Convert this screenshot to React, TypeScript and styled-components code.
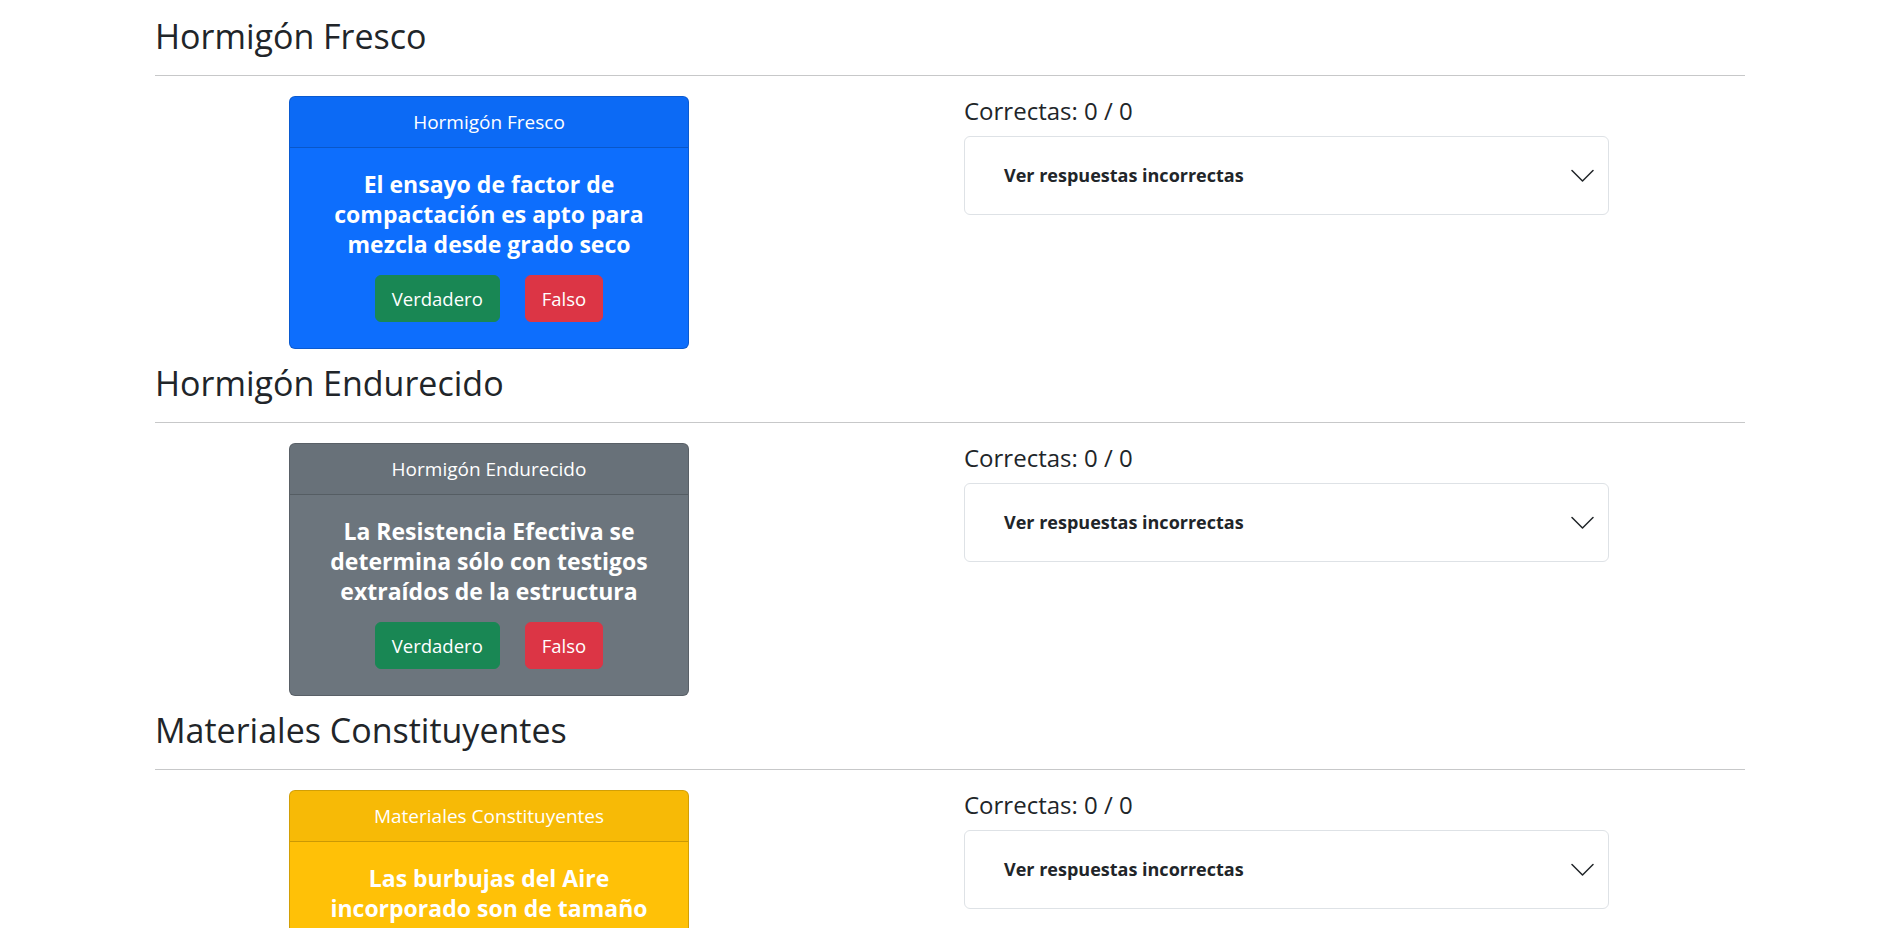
import React from "react";
import styled, { createGlobalStyle } from "styled-components";

const GlobalStyle = createGlobalStyle`
  html, body {
    margin: 0;
    padding: 0;
    background: #ffffff;
  }
  body {
    font-family: "Open Sans", "Noto Sans", sans-serif;
    color: #212529;
    -webkit-font-smoothing: antialiased;
  }
  * { box-sizing: border-box; }
`;

const Page = styled.main`
  width: 1590px;
  margin-left: 155px;
  padding-top: 16.5px;
`;

const Section = styled.section`
  padding-bottom: 14.5px;
`;

const SectionTitle = styled.h2`
  margin: 0;
  font-size: 34px;
  font-weight: 500;
  line-height: 38px;
  color: #212529;
`;

const Divider = styled.hr`
  margin: 20.5px 0 20px;
  border: 0;
  border-top: 1px solid rgba(33, 37, 41, 0.25);
  height: 0;
`;

const Row = styled.div`
  display: grid;
  grid-template-columns: 781px 1fr;
  column-gap: 28px;
  align-items: start;
`;

const CardColumn = styled.div`
  padding-left: 134px;
`;

const Card = styled.div<{ $bg: string }>`
  width: 400px;
  background: ${(p) => p.$bg};
  border: 1px solid rgba(0, 0, 0, 0.175);
  border-radius: 6px;
  color: #ffffff;
  text-align: center;
  overflow: hidden;
`;

const CardHeader = styled.div`
  padding: 12px 16px;
  font-size: 19px;
  line-height: 26px;
  background: rgba(0, 0, 0, 0.03);
  border-bottom: 1px solid rgba(0, 0, 0, 0.175);
`;

const CardBody = styled.div`
  padding: 21px 16px 26px;
`;

const Question = styled.h4`
  margin: 0 0 16px;
  font-size: 23px;
  font-weight: 700;
  line-height: 30px;
`;

const Buttons = styled.div`
  display: flex;
  justify-content: center;
  gap: 25px;
`;

const AnswerButton = styled.button<{ $bg: string }>`
  height: 47px;
  padding: 0 16px;
  border: 1px solid ${(p) => p.$bg};
  border-radius: 6px;
  background: ${(p) => p.$bg};
  color: #ffffff;
  font-family: inherit;
  font-size: 18.5px;
  line-height: 29px;
  cursor: pointer;
`;

const StatsColumn = styled.div`
  display: flex;
  flex-direction: column;
`;

const Score = styled.h4`
  margin: 0 0 11px;
  font-size: 24px;
  font-weight: 400;
  line-height: 29px;
`;

const Accordion = styled.div`
  width: 645px;
  border: 1px solid #dee2e6;
  border-radius: 6px;
  background: #ffffff;
`;

const AccordionButton = styled.button`
  width: 100%;
  display: flex;
  align-items: center;
  justify-content: space-between;
  padding: 26px 14px 26px 39px;
  border: 0;
  background: transparent;
  font-family: inherit;
  font-size: 18px;
  font-weight: 700;
  line-height: 25px;
  color: #212529;
  text-align: left;
  cursor: pointer;
`;

const Chevron = () => (
  <svg width="23" height="14" viewBox="0 0 23 14" aria-hidden="true">
    <path
      d="M1 1.5 L11.5 12 L22 1.5"
      fill="none"
      stroke="#212529"
      strokeWidth="1.5"
      strokeLinecap="round"
      strokeLinejoin="round"
    />
  </svg>
);

type Topic = { title: string; color: string; question: string };

const topics: Topic[] = [
  {
    title: "Hormigón Fresco",
    color: "#0d6efd",
    question:
      "El ensayo de factor de compactación es apto para mezcla desde grado seco",
  },
  {
    title: "Hormigón Endurecido",
    color: "#6c757d",
    question:
      "La Resistencia Efectiva se determina sólo con testigos extraídos de la estructura",
  },
  {
    title: "Materiales Constituyentes",
    color: "#ffc107",
    question: "Las burbujas del Aire incorporado son de tamaño microscópico",
  },
];

export default function App() {
  return (
    <>
      <GlobalStyle />
      <Page>
        {topics.map((t) => (
          <Section key={t.title}>
            <SectionTitle>{t.title}</SectionTitle>
            <Divider />
            <Row>
              <CardColumn>
                <Card $bg={t.color}>
                  <CardHeader>{t.title}</CardHeader>
                  <CardBody>
                    <Question>{t.question}</Question>
                    <Buttons>
                      <AnswerButton $bg="#198754">Verdadero</AnswerButton>
                      <AnswerButton $bg="#dc3545">Falso</AnswerButton>
                    </Buttons>
                  </CardBody>
                </Card>
              </CardColumn>
              <StatsColumn>
                <Score>Correctas: 0 / 0</Score>
                <Accordion>
                  <AccordionButton>
                    <span>Ver respuestas incorrectas</span>
                    <Chevron />
                  </AccordionButton>
                </Accordion>
              </StatsColumn>
            </Row>
          </Section>
        ))}
      </Page>
    </>
  );
}
